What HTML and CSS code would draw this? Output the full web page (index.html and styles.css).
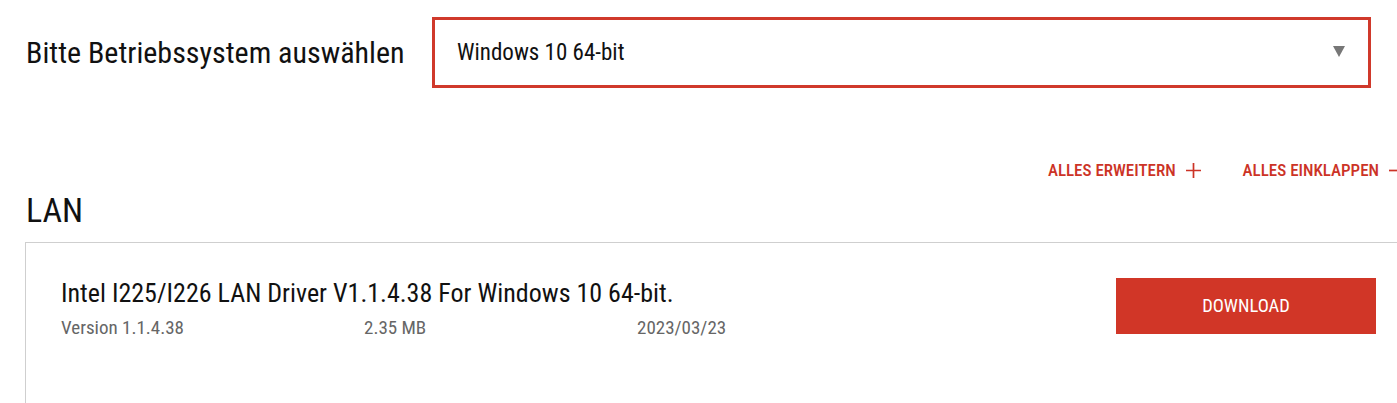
FILE: index.html
```html
<!DOCTYPE html>
<html lang="de">
<head>
<meta charset="utf-8">
<title>Treiber</title>
<link rel="stylesheet" href="styles.css">
</head>
<body>
<div class="page">
  <div class="os-row">
    <label class="os-label">Bitte Betriebssystem auswählen</label>
    <div class="os-select">
      <span class="os-value">Windows 10 64-bit</span>
      <span class="os-arrow"></span>
    </div>
  </div>

  <div class="toolbar">
    <a class="tool-link">ALLES ERWEITERN
      <svg class="sign" width="15" height="15" viewBox="0 0 15 15" aria-hidden="true"><path d="M7.5 0V15M0 7.5H15" stroke="currentColor" stroke-width="1.7" fill="none"/></svg>
    </a>
    <a class="tool-link">ALLES EINKLAPPEN
      <svg class="sign" width="15" height="15" viewBox="0 0 15 15" aria-hidden="true"><path d="M0 7.5H15" stroke="currentColor" stroke-width="1.7" fill="none"/></svg>
    </a>
  </div>

  <h2 class="section-title">LAN</h2>

  <div class="card">
    <div class="card-info">
      <div class="card-title">Intel I225/I226 LAN Driver V1.1.4.38 For Windows 10 64-bit.</div>
      <div class="card-meta">
        <span class="meta-version">Version 1.1.4.38</span>
        <span class="meta-size">2.35 MB</span>
        <span class="meta-date">2023/03/23</span>
      </div>
    </div>
    <a class="download-btn">DOWNLOAD</a>
  </div>
</div>
</body>
</html>
```
FILE: styles.css
```css
html, body {
  margin: 0;
  padding: 0;
  background: #fff;
  overflow: hidden;
}
*, *::before, *::after {
  box-sizing: border-box;
}
body {
  font-family: "Roboto Condensed", "Liberation Sans Narrow", Roboto, sans-serif;
  font-stretch: condensed;
  color: #111;
}
.page {
  width: 1406px;
  padding-left: 26px;
}
.os-row {
  display: flex;
  align-items: center;
  padding-top: 17px;
}
.os-label {
  font-size: 30px;
  width: 406px;
  color: #111;
}
.os-select {
  width: 939px;
  height: 71px;
  border: 3px solid #d0392b;
  display: flex;
  align-items: center;
  justify-content: space-between;
  padding: 0 23px 0 22px;
}
.os-value {
  font-size: 23px;
  color: #111;
}
.os-arrow {
  width: 0;
  height: 0;
  border-left: 6px solid transparent;
  border-right: 6px solid transparent;
  border-top: 11px solid #777;
  margin-top: -2px;
}
.toolbar {
  display: flex;
  justify-content: flex-end;
  gap: 42px;
  margin-top: 62px;
  height: 40px;
  align-items: center;
  margin-right: 2px;
}
.tool-link {
  font-size: 17px;
  font-weight: 500;
  color: #cc3326;
  display: flex;
  align-items: center;
  gap: 10px;
}
.sign {
  display: block;
  flex: none;
}
.section-title {
  font-size: 34px;
  font-weight: 400;
  margin: 0;
  line-height: 40px;
  color: #111;
}
.card {
  margin-top: 12px;
  margin-left: -1px;
  border: 1px solid #cfcfcf;
  border-right: none;
  display: flex;
  justify-content: space-between;
  align-items: flex-start;
  padding: 35px 30px 70px 35px;
}
.card-title {
  font-size: 26px;
  color: #111;
  margin-top: 0;
}
.card-meta {
  display: grid;
  grid-template-columns: 303px 273px auto;
  font-size: 19px;
  color: #666;
  margin-top: 8px;
}
.download-btn {
  width: 260px;
  height: 56px;
  background: #d13627;
  color: #fff;
  font-size: 18.5px;
  display: flex;
  align-items: center;
  justify-content: center;
}
```
